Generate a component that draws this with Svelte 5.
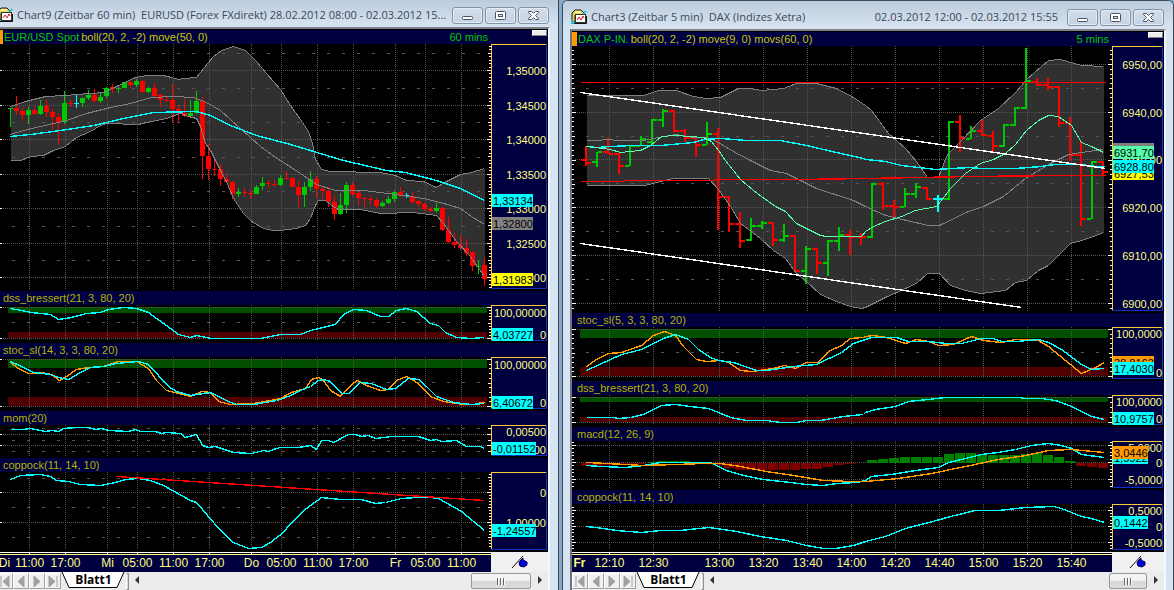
<script>
  const GREEN = '#00c800';
  const RED = '#ff0000';
  const CYAN = '#00ffff';
  const ORANGE = '#ff9900';
  const GREY = '#808080';
  const MINT = '#55ffaa';

  // Traces are stored at three units per pixel; each run has its own origin.
  // Points snap to pixel centres so that the crisp lines stay unbroken.
  const trace = (...runs) =>
    runs
      .flatMap(([ox, oy, text]) =>
        text.split(' ').map((p) => {
          const [x, y] = p.split(',').map(Number);
          return Math.floor(ox + x / 3) + 0.5 + ',' + (Math.floor(oy + y / 3) + 0.5);
        })
      )
      .join(' ');

  const reversed = (points) => points.split(' ').reverse().join(' ');

  const ticksOf = ({ y, h, tick }) => {
    const list = [];
    const [base, step, half, full] = tick;
    const first = Math.ceil((y + 1 - base) / step);
    const last = Math.floor((y + h - 3 - base) / step);
    for (let i = first; i <= last; i++) {
      list.push({ y: Math.floor(base + i * step), len: i % full === 0 ? 4 : i % half === 0 ? 3 : 2 });
    }
    return list;
  };

  const G = GREEN, R = RED, C = CYAN;
  // top, bottom of the body, then high and low
  const candles = [
    [G,108,109,108,127],[R,108,111,96,115],[R,111,115,107,121],[G,110,115,107,124],[R,110,114,106,115],
    [G,106,114,100,115],[R,106,112,100,117],[R,112,117,109,130],[R,117,122,113,145],[G,103,122,91,124],
    [R,103,104,100,107],[C,103,104,95,108],[G,98,103,98,107],[G,95,98,90,100],[R,95,101,89,102],
    [G,97,101,93,103],[G,88,96,87,98],[R,87,89,84,93],[G,88,89,87,93],[G,82,88,82,88],
    [R,82,85,81,88],[G,81,85,79,87],[R,81,92,80,93],[G,88,92,87,93],[R,88,96,83,97],
    [R,95,100,94,107],[R,100,101,96,102],[R,100,109,84,123],[R,109,113,105,123],[R,113,116,99,117],
    [G,113,116,100,117],[G,101,113,91,114],[R,101,156,97,179],[R,156,169,144,180],[R,169,170,158,176],
    [R,169,179,164,186],[R,179,182,173,183],[R,182,194,181,199],[G,192,194,188,197],[R,192,193,188,197],
    [R,193,194,190,199],[G,187,194,185,194],[G,183,186,177,190],[R,183,184,180,188],[R,184,185,180,187],
    [G,178,185,175,186],[R,178,179,171,179],[R,178,187,177,187],[R,187,195,181,207],[G,187,195,182,207],
    [G,179,187,171,191],[R,179,189,176,198],[R,189,191,186,199],[R,191,202,187,207],[R,202,214,196,220],
    [G,205,214,193,215],[G,185,205,182,213],[R,185,194,182,196],[R,193,198,192,206],[R,198,199,197,207],
    [R,199,200,195,205],[R,200,206,198,208],[G,203,206,201,207],[G,199,203,196,204],[G,192,199,191,202],
    [R,192,196,187,196],[C,195,196,193,198],[R,196,202,192,204],[R,201,204,200,207],[R,204,209,203,211],
    [R,209,211,207,212],[G,208,211,203,212],[R,208,230,207,231],[R,230,242,217,243],[R,242,245,233,248],
    [R,245,248,235,250],[R,248,253,239,256],[R,252,266,251,271],[G,266,267,261,274],[R,265,279,258,286]
  ];

  // high, low, open, close
  const bars = [
    [R,146,166,160,163],[G,152,167,162,152],[R,138,154,152,154],[R,153,174,154,166],[G,146,166,166,146],
    [G,136,146,146,139],[G,119,145,142,120],[G,109,127,120,111],[R,110,132,111,131],[R,129,142,131,138],
    [R,138,157,138,145],[G,122,145,145,134],[R,128,230,134,197],[R,196,232,197,224],[R,212,248,224,241],
    [G,218,241,240,226],[G,221,229,226,223],[R,222,246,223,240],[G,224,242,240,236],[R,235,272,236,271],
    [G,246,284,271,249],[R,248,274,249,263],[G,240,276,263,241],[G,227,251,241,235],[R,230,255,235,237],
    [R,233,245,237,237],[G,183,238,237,184],[R,182,210,184,206],[R,200,217,206,207],[G,188,207,207,194],
    [G,183,198,194,187],[R,187,200,188,199],[C,195,212,199,199],[G,121,200,199,122],[R,115,152,122,138],
    [G,126,139,139,131],[R,120,136,131,135],[R,131,152,136,146],[G,124,147,146,125],[G,107,126,125,108],
    [G,48,109,108,81],[R,78,86,82,85],[R,78,90,85,87],[R,86,127,87,123],[R,117,161,123,155],
    [R,141,226,155,219],[G,161,219,219,162],[R,161,176,162,172]
  ];

  const histogram = [
    -3,-3,-2,-2,-1,-1,1,2,2,2,1,1,-2,-5,-7,-7,-7,-7,-7,-7,-6,-6,-4,-2,-1,0,
    3,4,5,6,6,6,6,9,10,10,9,8,8,8,9,10,8,6,2,-3,-4,-5
  ];

  const eurUpper = trace(
    [0,0,'31,320 75,304 135,288 195,286 230,283 310,277 350,258 405,233 440,226 490,226 515,232 536,238 552,234 590,232 610,205 640,168 665,152 700,140 735,152 770,184 800,220 840,268'],
    [280,0,'30,315 60,358 85,395 97,430 107,478'],
    [280,150,'112,38 125,58 150,65 300,68 345,77 380,92 430,95 470,112 500,95 540,72 575,68 613,55']
  );
  const eurLower = trace(
    [0,150,'31,30 60,30 95,20 130,15 160,0 195,-12 230,-38 270,-57 300,-75 320,-79 415,-78 440,-84 500,-96 540,-110 565,-100 590,-96 600,-70 615,-20 630,0 660,60 680,95 700,145 730,190 755,215 790,235 820,242'],
    [280,150,'0,240 50,235 75,225 92,205 105,165 115,152 135,152 155,165 175,178 240,177 300,190 400,187 470,195 490,220 530,275 570,320 613,380']
  );
  const daxUpper = trace(
    [560,0,'78,287 250,287 295,272 350,271 400,290 440,296 480,291 535,266 570,266 605,271 670,264 710,250 770,250 830,266 880,292'],
    [865,0,'0,317 20,330 70,400 120,445 155,485 187,532 220,532 245,470 260,450 290,420 345,362 400,325 450,278 483,238 550,182 585,178 650,195 715,200']
  );
  const daxLower = trace(
    [560,150,'78,105 255,106 300,95 340,86 445,86 475,118 510,170 540,220 600,265 640,300 675,325 710,370 740,395 780,432 830,455 870,470 905,476'],
    [865,150,'0,473 60,443 155,400 187,370 222,370 255,405 300,422 345,431 420,420 450,398 485,390 520,362 550,345 615,280 650,270 685,260 715,247']
  );

  const windows = [
    {
      id: 'eur',
      title: 'Chart9 (Zeitbar 60 min)\u00a0 EURUSD (Forex FXdirekt) 28.02.2012 08:00 - 02.03.2012 15...',
      range: '',
      symbol: 'EUR/USD Spot',
      studies: 'boll(20, 2, -2) move(50, 0)',
      period: '60 mins',
      x: 0, w: 491, axis: 57, leftTicks: false, dash: 12,
      grid: [29,65,107,137,173,209,251,281,317,353,395,425,461],
      times: [['Di',4],['11:00',29],['17:00',65],['Mi',107],['05:00',137],['11:00',173],['17:00',209],['Do',251],['05:00',281],['11:00',317],['17:00',353],['Fr',395],['05:00',425],['11:00',461]],
      panels: [
        {
          name: '', y: 44, h: 247, tick: [70.5, 3.45, 5, 10], kind: 'candles',
          major: [70,105,139,174,208,243,277], minor: [53,88,122,157,191,226,260],
          area: eurUpper + ' ' + reversed(eurLower),
          lines: [
            [GREY, 1, eurUpper], [GREY, 1, eurLower],
            [GREY, 1, trace(
              [0,0,'31,402 70,392 120,378 200,362 260,340 330,322 390,310 455,292 520,288 580,291 620,308 660,330 720,385 780,438 835,478'],
              [280,150,'0,32 60,70 110,102 165,120 250,122 345,133 430,145 480,158 540,175 575,198 613,222'])],
            [CYAN, 1.4, trace(
              [0,0,'31,410 90,403 180,390 280,375 370,354 460,338 590,333 630,345 690,375 770,407 870,434'],
              [280,150,'90,0 190,30 320,62 375,68 470,90 540,115 613,152'])]
          ],
          scale: [['1,35000',70],['1,34500',105],['1,34000',139],['1,33500',174],['1,33000',208],['1,32500',243],['1,32000',277]],
          tags: [[CYAN,'1,33134',200,41],[GREY,'1,32800',223,41],['#ffff00','1,31983',279,41]]
        },
        {
          name: 'dss_bressert(21, 3, 80, 20)', y: 305, h: 38, tick: [307.5, 3.1, 5, 10],
          major: [307,338], minor: [322], over: [307, 6], under: [332, 6],
          lines: [[CYAN, 1.4, trace(
            [0,290,'31,55 65,62 95,68 150,74 175,88 215,82 260,70 300,67 325,57 370,52 410,54 445,68 470,85 500,107 535,132 570,142 590,136 635,145 780,145 840,134'],
            [280,290,'60,133 90,120 165,102 190,72 220,58 260,60 300,78 325,78 350,62 380,54 410,65 450,100 475,105 495,127 530,141 575,145 613,142'])]],
          scale: [['100,00000',312],['0',334]], tags: [[CYAN,'4,03727',334,41]]
        },
        {
          name: 'stoc_sl(14, 3, 3, 80, 20)', y: 357, h: 54, tick: [359.5, 4.7, 5, 10],
          major: [359,406], minor: [382], over: [359, 9], under: [397, 9],
          lines: [
            [ORANGE, 1.4, trace(
              [0,290,'31,218 55,235 85,250 125,247 155,254 178,272 200,260 230,238 265,231 310,228 355,214 410,215 445,235 470,270 500,300 570,320 605,303 630,308 655,335 690,343 760,341 845,325'],
              [280,290,'0,325 35,308 75,295 95,268 115,262 130,270 150,300 180,320 210,285 232,272 260,285 300,300 325,298 350,270 378,259 415,280 450,320 490,335 550,343 590,343 600,338 613,338'])],
            [CYAN, 1.4, trace(
              [0,290,'31,215 65,228 100,247 150,252 175,262 205,267 240,246 270,233 310,230 350,220 415,214 445,224 475,255 505,290 530,304 570,316 630,308 655,320 685,335 710,343 760,342 830,330'],
              [280,290,'0,328 30,315 60,302 90,288 115,270 130,268 150,275 185,310 205,310 240,278 275,280 320,298 345,295 385,266 415,268 440,290 470,318 520,338 575,343 613,340'])]
          ],
          scale: [['100,00000',364],['0',402]], tags: [[CYAN,'6,40672',402,41]]
        },
        {
          name: 'mom(20)', y: 425, h: 33, tick: [434.5, 5.6, 1, 2],
          major: [434,445], minor: [428,440,451],
          lines: [[CYAN, 1.4, trace(
            [0,290,'31,419 70,419 90,415 135,424 155,420 175,424 190,416 230,412 265,412 285,418 305,415 325,421 385,423 405,418 420,424 465,424 485,431 500,427 540,431 555,442 590,433 607,465 625,473 645,468 700,488 755,490 790,481 805,484 830,474'],
            [280,290,'0,473 55,473 90,466 110,478 125,450 145,450 160,457 205,434 225,433 245,440 265,437 285,444 335,438 415,440 450,451 470,447 485,455 530,452 560,470 600,470 613,475'])]],
          scale: [['0,00500',431],['-0,01000',449]], tags: [[CYAN,'-0,01152',448,44]]
        },
        {
          name: 'coppock(11, 14, 10)', y: 472, h: 80, tick: [492.5, 3, 5, 10],
          major: [492,522], minor: [478,507,537],
          lines: [
            [CYAN, 1.4, trace(
              [0,290,'31,569 60,556 120,553 150,560 170,571 205,573 240,582 300,586 345,577 375,568 415,565 450,571 490,585 570,630 590,637 640,697 700,757 745,776 785,773 810,757 838,736'],
              [280,290,'0,735 40,692 80,655 125,622 180,627 245,629 285,639 315,638 365,625 410,622 450,622 475,625 545,665 613,722'])],
            [RED, 1.4, trace([0,290,'350,559'],[280,290,'613,632'])]
          ],
          scale: [['0',492],['-1,00000',522]], tags: [[CYAN,'-1,24557',530,44]]
        }
      ]
    },
    {
      id: 'dax',
      title: 'Chart3 (Zeitbar 5 min)\u00a0 DAX (Indizes Xetra)',
      range: '02.03.2012 12:00 - 02.03.2012 15:55',
      symbol: 'DAX P-IN.',
      studies: 'boll(20, 2, -2) move(9, 0) movs(60, 0)',
      period: '5 mins',
      x: 572, w: 540, axis: 52, leftTicks: true, dash: 586,
      grid: [609,653,719,763,807,851,895,939,983,1027,1071],
      times: [['Fr',579],['12:10',609],['12:30',653],['13:00',719],['13:20',763],['13:40',807],['14:00',851],['14:20',895],['14:40',939],['15:00',983],['15:20',1027],['15:40',1071]],
      panels: [
        {
          name: '', y: 46, h: 267, tick: [64.5, 4.78, 5, 10], kind: 'bars',
          major: [64,112,159,207,255,303], minor: [88,136,183,231,279],
          area: daxUpper + ' ' + reversed(daxLower),
          lines: [
            [GREY, 1, daxUpper], [GREY, 1, daxLower],
            [GREY, 1, trace(
              [560,0,'78,422 110,422 145,418 170,422 250,422 280,415 345,402 400,412 440,412 470,425 520,453 572,480'],
              [560,150,'630,60 680,70 770,115 880,152'],
              [865,150,'0,168 60,196 125,212 190,227 222,227 310,185 355,168 415,138 480,85 550,42 610,12 650,8 690,2 715,-3'])],
            [RED, 1.4, trace([560,0,'60,247'],[865,0,'720,247'])],
            [RED, 1.4, trace([560,150,'60,94 190,94 193,92 460,91 465,89 715,87 915,85'],[865,150,'0,85 320,79 590,76 720,76'])],
            [CYAN, 1.4, trace(
              [560,0,'78,438 110,442 150,440 220,437 300,437 400,427 430,418 480,416 560,421 660,422 740,436 830,458 910,476'],
              [865,150,'0,28 60,34 110,45 210,58 260,56 320,51 345,55 450,55 530,49 570,43 650,44 690,49 717,50'])],
            [MINT, 1, trace(
              [560,0,'78,438 150,448 180,458 240,450 270,435 305,410 345,405 390,410 430,413 455,425 475,450 497,480'],
              [560,150,'540,88 580,122 605,138 645,170 675,185 710,220 780,256 800,259 905,259'],
              [865,150,'0,245 25,228 60,215 110,200 150,180 215,168 230,150 255,115 300,70 345,40 385,28 420,10'],
              [865,0,'450,432 485,392 520,362 550,346 580,349 620,375 650,428 680,440 715,458'])],
            ['#ffffff', 1.4, trace([560,0,'60,277'],[865,150,'720,54'])],
            ['#ffffff', 1.4, trace([560,150,'60,280'],[865,150,'470,472'])]
          ],
          scale: [['6950,00',64],['6940,00',112],['6930,00',159],['6920,00',207],['6910,00',255],['6900,00',303]],
          tags: [[GREY,'6930,94',149,41],[MINT,'6931,70',152,41],['#ffff00','6927,53',173,41],[CYAN,'6928,80',166,41]]
        },
        {
          name: 'stoc_sl(5, 3, 3, 80, 20)', y: 327, h: 54, tick: [329.5, 4.7, 5, 10],
          major: [329,376], minor: [352], over: [329, 9], under: [367, 9],
          lines: [
            [ORANGE, 1.4, trace(
              [560,310,'78,170 110,148 145,130 185,127 245,106 280,75 312,64 345,75 370,108 410,148 440,155 480,150 505,158 540,180 575,184 640,176 672,166 705,174 740,157 775,157 805,125 845,105 870,86 910,81'],
              [865,310,'0,80 25,77 65,82 120,100 155,88 190,93 220,106 265,102 318,80 355,90 410,97 450,88 520,90 550,108 600,152 650,190 690,172 717,157'])],
            [CYAN, 1.4, trace(
              [560,310,'78,182 150,147 185,134 245,119 310,85 345,73 385,88 415,118 450,142 475,151 520,156 590,180 620,181 700,170 770,163 845,127 880,100'],
              [865,310,'0,87 20,82 95,82 130,94 190,94 245,101 290,99 350,85 385,86 410,94 455,94 520,89 550,96 590,118 650,162 680,178 717,176'])]
          ],
          scale: [['100,0000',333],['0',372]], tags: [[ORANGE,'38,8163',362,41],[CYAN,'17,4030',368,41]]
        },
        {
          name: 'dss_bressert(21, 3, 80, 20)', y: 395, h: 32, tick: [397.5, 5, 5, 5],
          major: [397,422], minor: [], over: [397, 5], under: [417, 5],
          lines: [[CYAN, 1.4, trace(
            [560,310,'78,322 160,322 175,325 210,322 250,312 305,287 345,283 390,290 445,296 475,308 510,322 560,331 620,332 660,338 710,338 740,331 780,331 850,319 910,312'],
            [865,310,'0,308 30,298 90,290 130,275 190,267 240,262 465,262 475,265 530,265 570,272 620,290 680,320 717,328'])]],
          scale: [['100,0000',401],['0',418]], tags: [[CYAN,'10,9757',418,41]]
        },
        {
          name: 'macd(12, 26, 9)', y: 441, h: 49, tick: [462.5, 3.4, 5, 5], kind: 'histogram',
          major: [445,462,479], minor: [],
          lines: [
            [CYAN, 1.4, trace(
              [560,310,'78,467 125,470 195,471 250,467 300,458 450,458 500,480 550,495 610,507 690,516 740,524 790,526 830,521 890,517'],
              [865,310,'0,512 20,500 80,492 150,480 220,472 250,458 290,447 350,434 400,428 450,418 500,405 550,401 590,405 620,415 650,433 717,442'])],
            [ORANGE, 1.4, trace(
              [560,310,'78,458 140,461 250,466 350,462 430,459 480,461 540,470 620,484 700,496 790,510 870,515'],
              [865,310,'0,514 100,505 200,490 300,470 400,449 480,435 550,422 620,418 717,428'])]
          ],
          scale: [['5,0000',447],['0',462],['-5,0000',479]], tags: [[CYAN,'1,5522',457,35],[ORANGE,'3,0446',452,35]]
        },
        {
          name: 'coppock(11, 14, 10)', y: 504, h: 48, tick: [526.5, 3.2, 5, 5],
          major: [510,526,542], minor: [],
          lines: [[CYAN, 1.4, trace(
            [560,310,'78,649 130,654 170,661 245,667 300,661 360,661 445,652 530,664 600,678 680,692 740,707 790,714 825,715 880,707'],
            [865,310,'0,694 60,678 120,655 215,632 255,619 330,602 400,601 480,592 565,590 590,594 650,619 680,624 717,638'])]],
          scale: [['0,5000',510],['0',526],['-0,5000',542]], tags: [[CYAN,'0,1442',522,35]]
        }
      ]
    }
  ];
</script>

<main class="desktop">
  {#each windows as win (win.id)}
    <section class="window {win.id}" aria-label={win.symbol}>
      <header class="titlebar">
        <svg class="app-icon" width="16" height="16" viewBox="0 0 16 16" aria-hidden="true">
          <path d="M1 13V4l3-3h6l3 3v2H4v7z" fill="#e9d54e" stroke="#1b1b1b" />
          <path d="M4 3h6" stroke="#fff6a8" stroke-width="2" />
          <path d="M12 6l3-4M1 11v3h3" fill="none" stroke="#19c6dc" stroke-width="2" />
          <rect x="4.500" y="5.500" width="10" height="8" fill="#fff" stroke="#333" />
          <path d="M3 14.500h12.500V7" fill="none" stroke="#111" />
          <path d="M6 11l2-3 2 3 2-4 1 2" fill="none" stroke="#e01818" />
        </svg>
        <h1>{win.title}</h1>
        {#if win.range}<span class="range">{win.range}</span>{/if}
        <div class="controls">
          <button type="button" aria-label="Minimize">
            <svg width="13" height="11" viewBox="0 0 13 11"><rect x="1.500" y="6.500" width="10" height="3" rx="1" fill="#fff" stroke="#4b5263" /></svg>
          </button>
          <button type="button" aria-label="Maximize">
            <svg width="13" height="11" viewBox="0 0 13 11"><rect x="1.500" y="1.500" width="10" height="8" rx="1" fill="#fff" stroke="#4b5263" /><rect x="4.500" y="4.500" width="4" height="2" fill="#dfe7f1" stroke="#4b5263" /></svg>
          </button>
          <button type="button" aria-label="Close">
            <svg width="13" height="11" viewBox="0 0 13 11"><path d="M1.500 1.500h3l2 2 2-2h3v1l-3 3 3 3v1h-3l-2-2-2 2h-3v-1l3-3-3-3z" fill="#fff" stroke="#4b5263" /></svg>
          </button>
        </div>
      </header>

      <div class="client">
        {#each win.panels as panel, index}
          <div class="strip" class:first={index === 0}>
            {#if index === 0}
              <i class="marker"></i>
              <span class="symbol">{win.symbol}</span>
              <span class="studies">{win.studies}</span>
              <span class="period" style:margin-right="{win.axis + 3}px">{win.period}</span>
              <i class="handle"></i>
            {:else}
              <span class="study">{panel.name}</span>
            {/if}
          </div>
          <div class="panel">
            <svg class="plot" height={panel.h} viewBox="{win.x} {panel.y} {win.w} {panel.h}" preserveAspectRatio="none" role="img" aria-label={panel.name || win.symbol}>
              {#if panel.area}<polygon points={panel.area} fill="#303030" />{/if}
              {#if panel.over}
                <rect x={win.x + 8} y={panel.over[0]} width={win.w - 12} height={panel.over[1]} fill="#005000" />
                <rect x={win.x + 8} y={panel.under[0]} width={win.w - 12} height={panel.under[1]} fill="#500000" />
              {/if}
              <g stroke="#565656" stroke-dasharray="1 1">
                {#each win.grid as gx}<line x1={gx + 0.5} x2={gx + 0.5} y1={panel.y} y2={panel.y + panel.h - 2} />{/each}
                {#each panel.major as gy}<line x1={win.x + 3} x2={win.x + win.w - 5} y1={gy + 0.5} y2={gy + 0.5} />{/each}
              </g>
              <g stroke="#565656" stroke-dasharray="3 12">
                {#each panel.minor as gy}<line x1={win.dash} x2={win.x + win.w - 5} y1={gy + 0.5} y2={gy + 0.5} />{/each}
              </g>
              {#if panel.kind === 'histogram'}
                {#each histogram as v, i}
                  <rect x={581 + 11 * i} y={v > 0 ? 463 - v : 463} width="10" height={Math.abs(v)} fill={v > 0 ? '#008000' : '#800000'} />
                {/each}
              {/if}
              {#if panel.kind === 'candles'}
                {#each candles as [color, top, bottom, high, low], i}
                  <rect x={10 + 6 * i} y={high} width="1" height={low - high} fill={color} />
                  <rect x={8 + 6 * i} y={top} width="5" height={bottom - top} fill={color} />
                {/each}
              {/if}
              {#if panel.kind === 'bars'}
                {#each bars as [color, high, low, open, close], i}
                  <rect x={585 + 11 * i} y={high} width="2" height={low - high} fill={color} />
                  <rect x={581 + 11 * i} y={open - 1} width="4" height="2" fill={color} />
                  <rect x={587 + 11 * i} y={close - 1} width="4" height="2" fill={color} />
                {/each}
              {/if}
              {#each panel.lines as [color, width, points]}
                <polyline {points} fill="none" stroke={color} stroke-width={width} />
              {/each}
              {#each ticksOf(panel) as t}
                <rect x={win.x + win.w - t.len} y={t.y} width={t.len} height="1" fill="#fff" />
                {#if win.leftTicks}
                  <rect x={win.x} y={t.y} width={t.len} height="1" fill="#fff" />
                {:else if t.len === 4}
                  <rect x="0" y={t.y} width="2" height="1" fill="#fff" />
                {/if}
              {/each}
            </svg>
            <svg class="axis" width={win.axis} height={panel.h} viewBox="0 {panel.y} {win.axis} {panel.h}">
              <rect x="0" y={panel.y} width={win.axis - 1} height={panel.h - 2} fill="#000040" />
              <rect x={win.axis - 2} y={panel.y} width="1" height={panel.h - 2} fill="#0a32c8" />
              <rect x="0" y={panel.y + panel.h - 3} width={win.axis - 1} height="1" fill="#0a32c8" />
              <rect x="0" y={panel.y} width={win.axis - 2} height="1" fill="#ffc832" />
              <rect x="0" y={panel.y} width="1" height={panel.h - 3} fill="#ffc832" />
              {#each panel.scale as [label, y]}
                <text x={win.axis - 2} y={y + 5} text-anchor="end" fill="#ffff80">{label}</text>
              {/each}
              {#each panel.tags as [color, label, y, w]}
                <rect x="1" y={y - 6} width={w} height="13" fill={color} />
                <text x="2" y={y + 5} fill="#000">{label}</text>
              {/each}
            </svg>
          </div>
        {/each}

        <div class="timeline">
          <svg class="times" height="20">
            <rect width="100%" height="20" fill="#000040" />
            <rect width="100%" height="1" fill="#fff" />
            <rect y="1" width="100%" height="1" fill="#000" />
            <rect y="2" width="100%" height="1" fill="#ffff80" />
            {#each win.grid as gx}
              <rect x="{((gx - win.x) / win.w) * 100}%" y="0" width="1" height="3" fill="#fff" />
            {/each}
            {#each win.times as [label, tx], i}
              <text class:day={win.leftTicks && i === 0} x="{((tx + 0.5 - win.x) / win.w) * 100}%" y="15" text-anchor="middle" fill="#ffff80">{label}</text>
            {/each}
          </svg>
          <div class="corner" style:width="{win.axis}px">
            <svg width="18" height="14" viewBox="0 0 18 14" aria-hidden="true">
              <path d="M1 13L12 1" stroke="#111" />
              <path d="M9 6l3-3v2l4 2 0 3-3 2-4-1-1-3z" fill="#0000e0" stroke="#000050" />
            </svg>
          </div>
        </div>

        <nav class="sheets" aria-label="Sheets">
          <div class="steps">
            <button type="button" aria-label="First"><svg width="12" height="11" viewBox="0 0 12 11"><path d="M2 0v11M10 0v11L4 5.500z" /></svg></button>
            <button type="button" aria-label="Previous"><svg width="12" height="11" viewBox="0 0 12 11"><path d="M9 0v11L3 5.500z" /></svg></button>
            <button type="button" aria-label="Next"><svg width="12" height="11" viewBox="0 0 12 11"><path d="M3 0v11l6-5.500z" /></svg></button>
            <button type="button" aria-label="Last"><svg width="12" height="11" viewBox="0 0 12 11"><path d="M2 0v11l6-5.500zM10 0v11" /></svg></button>
          </div>
          <button type="button" class="sheet">
            <svg width="65" height="16" viewBox="0 0 65 16" aria-hidden="true"><path d="M1 0L8 15.500H56L63 0" fill="#fff" stroke="#000" /></svg>
            <span>Blatt1</span>
          </button>
          <i class="splitter"></i>
          <div class="scroll">
            <button type="button" class="arrow" aria-label="Scroll left"><svg width="5" height="8" viewBox="0 0 5 8"><path d="M4 0v8L0 4z" fill="#333" /></svg></button>
            <div class="track"><div class="thumb"><i></i><i></i><i></i></div></div>
            <button type="button" class="arrow" aria-label="Scroll right"><svg width="5" height="8" viewBox="0 0 5 8"><path d="M1 0v8l4-4z" fill="#333" /></svg></button>
          </div>
        </nav>
      </div>
    </section>
  {/each}
</main>

<style>
  :global(body) { background: #86a9c8; }
  .desktop { display: grid; grid-template-columns: minmax(0, 559fr) minmax(0, 612fr); gap: 3px; min-height: 100vh; overflow: hidden; background: #86a9c8; }
  .window { box-sizing: border-box; min-width: 0; background: #d6e3f2; border: 0 solid #3c4654; display: flex; flex-direction: column; }
  .eur { border-right-width: 1px; padding-right: 8px; }
  .dax { border-width: 1px 1px 0 1px; padding: 0 7px; border-radius: 6px 6px 0 0; }

  .titlebar { display: flex; align-items: center; height: 27px; margin-right: -8px; padding: 3px 9px 0 0; box-sizing: border-box; background: linear-gradient(#bccbdc, #d8e4f1); }
  .dax .titlebar { height: 28px; margin: 0 -7px; padding: 4px 9px 0 8px; border-radius: 5px 5px 0 0; }
  .app-icon { flex: none; }
  .eur .app-icon { margin-left: -3px; }
  h1 { flex: 1; margin: 0 0 0 4px; min-width: 0; white-space: nowrap; overflow: hidden; font: 400 11px/18px "Open Sans", sans-serif; color: #3c475c; }
  .range { flex: none; margin-right: 9px; font: 11px/18px "Open Sans", sans-serif; color: #3c475c; white-space: nowrap; }
  .controls { flex: none; display: flex; gap: 2px; }
  .controls button { width: 31px; height: 17px; padding: 0; display: flex; align-items: center; justify-content: center; border: 1px solid #8492a8; border-radius: 3px; background: linear-gradient(#d3deeb, #c5d2e2); box-shadow: inset 0 0 0 1px #e4ecf5; }

  .client { display: flex; flex-direction: column; background: #000; border-top: 2px solid #7d8187; border-right: 2px solid #f4f7fa; padding-top: 1px; }
  .dax .client { border-left: 2px solid #6f747b; }
  .strip { display: flex; align-items: center; height: 14px; background: #000040; font: 11px/14px "Liberation Sans", sans-serif; white-space: nowrap; }
  .marker { width: 3px; height: 14px; margin-right: 1px; background: #ff9900; }
  .dax .marker { width: 5px; }
  .symbol { color: #00c800; margin-right: 2px; }
  .studies { color: #c8c800; }
  .period { color: #00c800; margin-left: auto; }
  .strip.first { position: relative; }
  .handle { position: absolute; top: 0; right: 1px; width: 15px; height: 6px; box-sizing: border-box; background: #ececec; border: 1px solid; border-color: #fff #808080 #808080 #fff; }
  .study { color: #b4b400; padding-left: 3px; }
  .dax .study { padding-left: 5px; }

  .panel { display: flex; }
  .plot { flex: 1; min-width: 0; display: block; shape-rendering: crispEdges; background: #000; }
  .axis { flex: none; display: block; shape-rendering: crispEdges; background: #000; font: 11px "Liberation Sans", sans-serif; }

  .timeline { display: flex; }
  .times { flex: 1; min-width: 0; display: block; shape-rendering: crispEdges; font: 12px "Liberation Sans", sans-serif; }
  .day { font-weight: 700; }
  .corner { flex: none; display: flex; align-items: center; justify-content: center; background: #f0f0f0; }

  .sheets { display: flex; height: 18px; background: #ececec; }
  .eur .steps { margin-left: -3px; }
  .steps { display: flex; }
  .steps button { width: 16px; height: 16px; margin-top: 1px; padding: 0; display: flex; align-items: center; justify-content: center; border: 1px solid; border-color: #fff #a0a0a0 #a0a0a0 #fff; background: #f0f0f0; }
  .steps path { fill: #a0a0a0; stroke: #a0a0a0; }
  .sheet { position: relative; width: 65px; height: 16px; margin: 0; padding: 0; border: 0; background: none; font: 700 12px/16px "Open Sans", sans-serif; color: #000; }
  .sheet svg { display: block; }
  .sheet span { position: absolute; inset: 0; text-align: center; }
  .splitter { width: 1px; height: 15px; margin-top: 1px; border: 1px solid #909090; border-left-color: #fff; background: #d8d8d8; }
  .scroll { flex: 1; display: flex; background: #ececec; }
  .arrow { width: 17px; height: 16px; padding: 0; border: 0; background: none; display: flex; align-items: center; justify-content: center; }
  .track { flex: 1; display: flex; justify-content: flex-end; }
  .thumb { width: 58px; height: 14px; margin-top: 1px; display: flex; align-items: center; justify-content: center; gap: 1px; border: 1px solid #979797; border-radius: 2px; background: linear-gradient(#f4f4f4 45%, #d8d8da 50%, #dcdcde); }
  .dax .thumb { width: 36px; }
  .thumb i { width: 2px; height: 7px; background: linear-gradient(90deg, #666 50%, #fff 50%); }
</style>
